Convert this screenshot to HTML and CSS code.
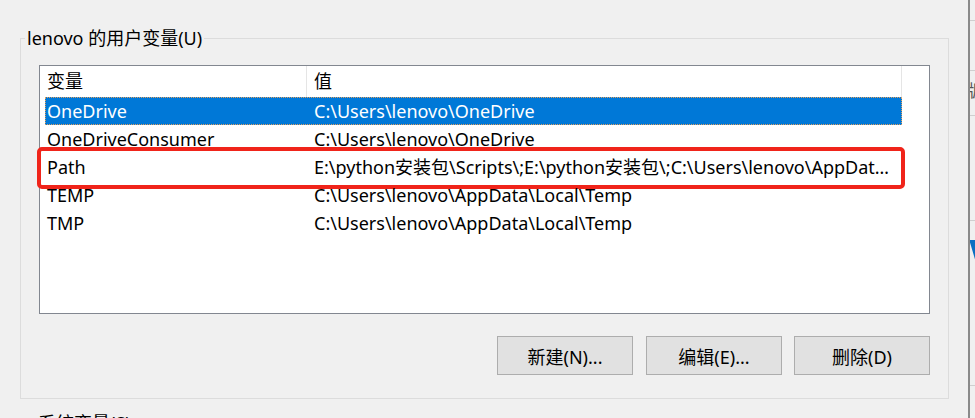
FILE: index.html
```html
<!DOCTYPE html>
<html lang="zh-CN">
<head>
<meta charset="utf-8">
<title>环境变量</title>
<link rel="stylesheet" href="styles.css">
</head>
<body>
<div class="page">
  <div class="main">
    <fieldset class="group">
      <legend class="legend">lenovo 的用户变量(U)</legend>
      <div class="list">
        <div class="row head">
          <div class="c1">变量</div>
          <div class="c2">值</div>
        </div>
        <div class="row sel">
          <div class="c1">OneDrive</div>
          <div class="c2">C:\Users\lenovo\OneDrive</div>
        </div>
        <div class="row">
          <div class="c1">OneDriveConsumer</div>
          <div class="c2">C:\Users\lenovo\OneDrive</div>
        </div>
        <div class="row mark">
          <div class="c1">Path</div>
          <div class="c2">E:\python安装包\Scripts\;E:\python安装包\;C:\Users\lenovo\AppData\Local\Microsoft\WindowsApps;</div>
          <span class="redbox"></span>
        </div>
        <div class="row">
          <div class="c1">TEMP</div>
          <div class="c2">C:\Users\lenovo\AppData\Local\Temp</div>
        </div>
        <div class="row">
          <div class="c1">TMP</div>
          <div class="c2">C:\Users\lenovo\AppData\Local\Temp</div>
        </div>
      </div>
      <div class="buttons">
        <button class="btn">新建(N)...</button>
        <button class="btn">编辑(E)...</button>
        <button class="btn">删除(D)</button>
      </div>
    </fieldset>
    <div class="next">系统变量(S)</div>
  </div>
  <div class="vline"></div>
  <div class="side">
    <div class="s-line s1"></div>
    <div class="s-line s2"></div>
    <div class="s-txt">版本</div>
    <div class="s-line s3"></div>
    <div class="s-line s4"></div>
    <div class="s-logo">W</div>
    <div class="s-line s5"></div>
  </div>
</div>
</body>
</html>
```

FILE: styles.css
```css
html, body {
  margin: 0;
  padding: 0;
  background: #f0f0f0;
  overflow: hidden;
}
body {
  width: 975px;
  height: 418px;
  font-family: "Noto Sans", "Noto Sans CJK SC", sans-serif;
  font-size: 18px;
  color: #000;
}
.page {
  display: flex;
  height: 418px;
}
.main {
  width: 968px;
  flex: none;
  padding: 28px 0 0 20px;
  box-sizing: border-box;
}
.group {
  width: 929px;
  height: 371px;
  box-sizing: border-box;
  margin: 0;
  border: 1px solid #dcdcdc;
  padding: 17px 18px 0 18px;
  min-width: 0;
}
.legend {
  padding: 0 2px;
  margin-left: -14px;
  line-height: 20px;
  font-size: 18px;
}
.list {
  position: relative;
  height: 249px;
  box-sizing: border-box;
  border: 1px solid #828790;
  background: #fff;
  padding: 0 27px 0 5px;
}
.row {
  position: relative;
  display: flex;
  height: 28px;
  line-height: 28px;
  white-space: nowrap;
}
.row.head {
  height: 31px;
  line-height: 31px;
}
.head .c1 {
  border-right: 1px solid #e5e5e5;
}
.head .c2 {
  border-right: 1px solid #e5e5e5;
}
.c1 {
  width: 262px;
  flex: none;
  padding-left: 2px;
  box-sizing: border-box;
}
.c2 {
  flex: 1;
  min-width: 0;
  padding-left: 7px;
  padding-right: 6px;
  overflow: hidden;
  text-overflow: ellipsis;
}
.row.sel {
  background: #0078d7;
  color: #fff;
  outline: 1px dotted #e0a060;
  outline-offset: -1px;
}
.redbox {
  position: absolute;
  left: -8px;
  right: -3px;
  top: -6px;
  bottom: -8px;
  border: 4px solid #f0241a;
  border-radius: 5px;
}
.buttons {
  display: flex;
  justify-content: flex-end;
  margin-top: 22px;
}
.btn {
  width: 136px;
  height: 39px;
  margin-left: 13px;
  box-sizing: border-box;
  border: 1px solid #adadad;
  background: #e1e1e1;
  font-family: "Noto Sans", "Noto Sans CJK SC", sans-serif;
  font-size: 18px;
  color: #000;
  padding: 0;
}
.btn:last-child {
  margin-left: 12px;
}
.next {
  margin: 13px 0 0 18px;
  font-size: 18px;
  line-height: 22px;
}
.vline {
  width: 2px;
  flex: none;
  background: #8a8a8a;
}
.side {
  flex: 1;
  overflow: hidden;
  background: #f0f0f0;
  position: relative;
}
.s-line {
  height: 1px;
  background: #cfcfcf;
}
.s1 { margin-top: 20px; }
.s2 { margin-top: 49px; }
.s-txt {
  margin: 8px 0 0 -4px;
  font-size: 17px;
  line-height: 24px;
  color: #555;
  white-space: nowrap;
}
.s3 { margin-top: 12px; }
.s4 { margin-top: 104px; }
.s-logo {
  margin: 10px 0 0 -1px;
  font-size: 60px;
  line-height: 60px;
  color: #0a6fc2;
  font-family: "Liberation Sans", sans-serif;
}
.s5 { margin-top: 94px; }
```
